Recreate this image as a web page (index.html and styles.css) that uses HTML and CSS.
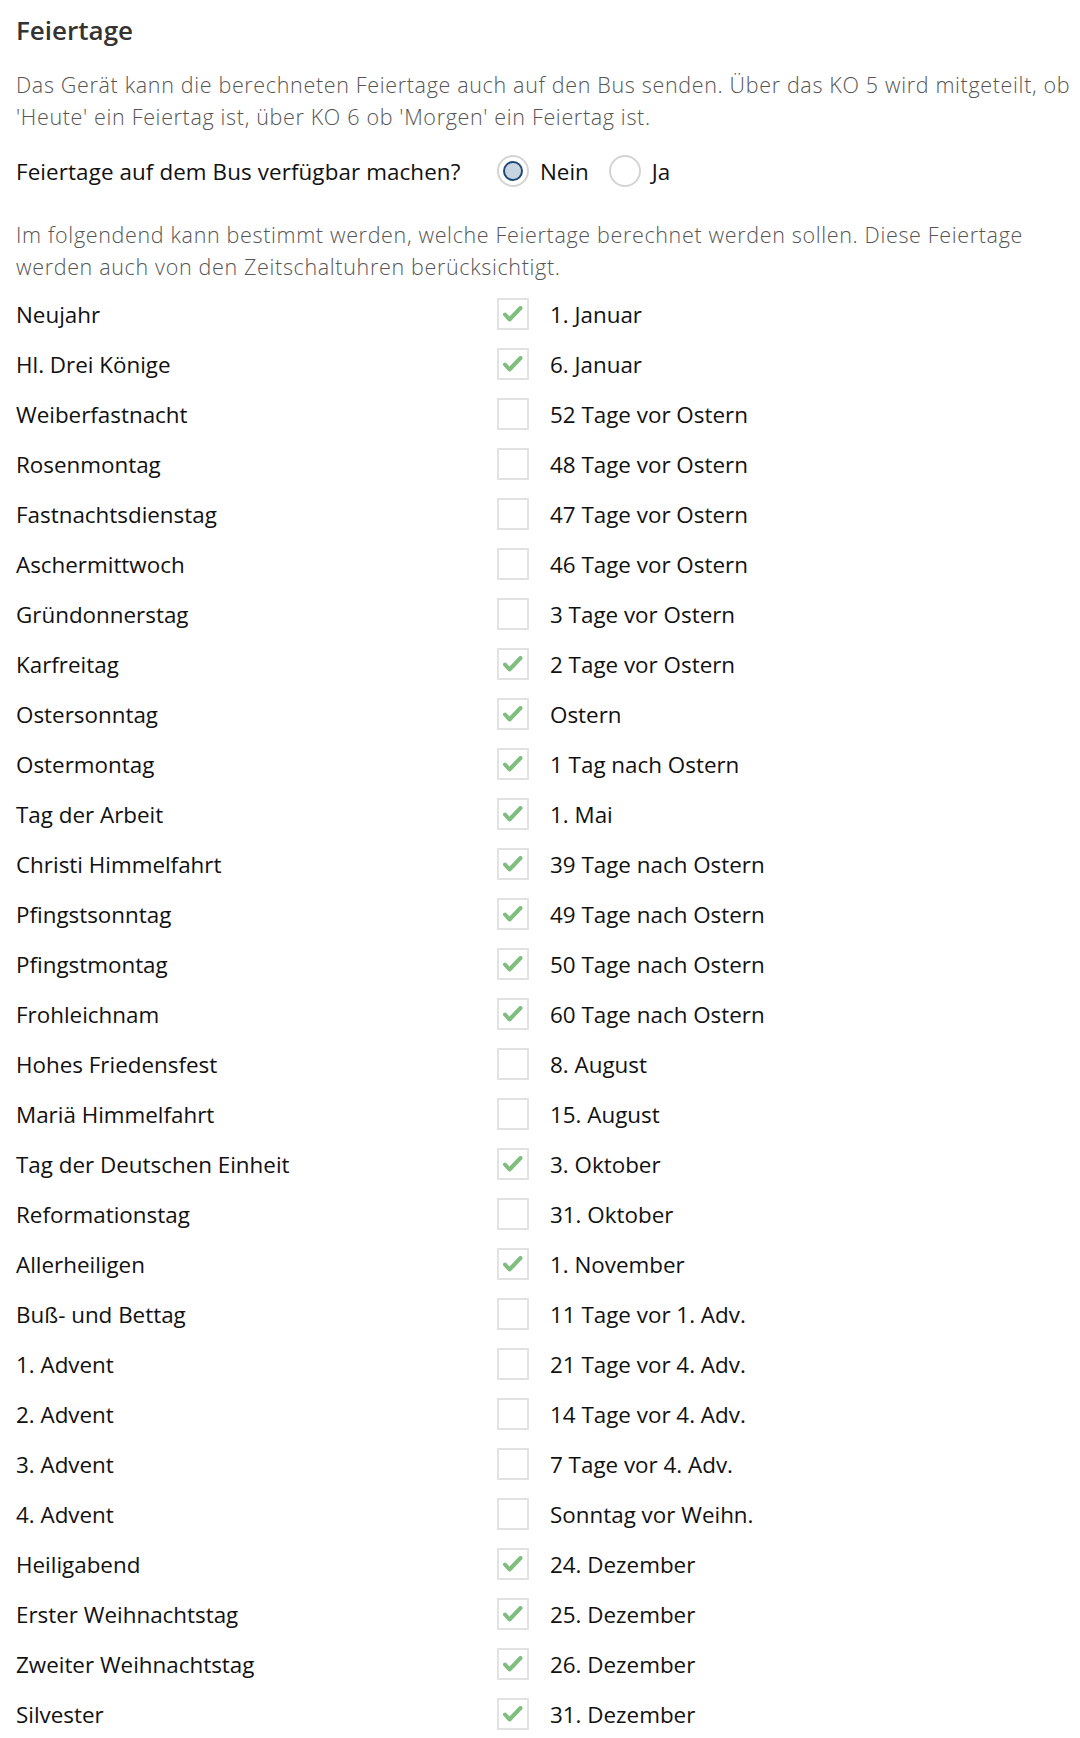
FILE: index.html
```html
<!DOCTYPE html>
<html lang="de">
<head>
<meta charset="utf-8">
<title>Feiertage</title>
<link rel="stylesheet" href="styles.css">
</head>
<body>
<div class="page">
  <h2 class="title">Feiertage</h2>
  <p class="desc">Das Gerät kann die berechneten Feiertage auch auf den Bus senden. Über das KO 5 wird mitgeteilt, ob 'Heute' ein Feiertag ist, über KO 6 ob 'Morgen' ein Feiertag ist.</p>

  <div class="radio-row">
    <div class="radio-label">Feiertage auf dem Bus verfügbar machen?</div>
    <div class="radio-group">
      <span class="radio checked"></span><span class="radio-text">Nein</span>
      <span class="radio"></span><span class="radio-text">Ja</span>
    </div>
  </div>

  <p class="desc desc2">Im folgendend kann bestimmt werden, welche Feiertage berechnet werden sollen. Diese Feiertage werden auch von den Zeitschaltuhren berücksichtigt.</p>

  <div class="list" id="list"></div>
</div>
<script src="app.js"></script>
</body>
</html>
```
FILE: app.js
```js
const items = [
  ["Neujahr", true, "1. Januar"],
  ["Hl. Drei Könige", true, "6. Januar"],
  ["Weiberfastnacht", false, "52 Tage vor Ostern"],
  ["Rosenmontag", false, "48 Tage vor Ostern"],
  ["Fastnachtsdienstag", false, "47 Tage vor Ostern"],
  ["Aschermittwoch", false, "46 Tage vor Ostern"],
  ["Gründonnerstag", false, "3 Tage vor Ostern"],
  ["Karfreitag", true, "2 Tage vor Ostern"],
  ["Ostersonntag", true, "Ostern"],
  ["Ostermontag", true, "1 Tag nach Ostern"],
  ["Tag der Arbeit", true, "1. Mai"],
  ["Christi Himmelfahrt", true, "39 Tage nach Ostern"],
  ["Pfingstsonntag", true, "49 Tage nach Ostern"],
  ["Pfingstmontag", true, "50 Tage nach Ostern"],
  ["Frohleichnam", true, "60 Tage nach Ostern"],
  ["Hohes Friedensfest", false, "8. August"],
  ["Mariä Himmelfahrt", false, "15. August"],
  ["Tag der Deutschen Einheit", true, "3. Oktober"],
  ["Reformationstag", false, "31. Oktober"],
  ["Allerheiligen", true, "1. November"],
  ["Buß- und Bettag", false, "11 Tage vor 1. Adv."],
  ["1. Advent", false, "21 Tage vor 4. Adv."],
  ["2. Advent", false, "14 Tage vor 4. Adv."],
  ["3. Advent", false, "7 Tage vor 4. Adv."],
  ["4. Advent", false, "Sonntag vor Weihn."],
  ["Heiligabend", true, "24. Dezember"],
  ["Erster Weihnachtstag", true, "25. Dezember"],
  ["Zweiter Weihnachtstag", true, "26. Dezember"],
  ["Silvester", true, "31. Dezember"]
];
const check = '<svg class="tick" viewBox="0 0 32 32" width="32" height="32"><path d="M8 16.5 L12.5 21.5 L23.5 10" fill="none" stroke="#7fbe7f" stroke-width="4" stroke-linecap="round" stroke-linejoin="round"/></svg>';
const list = document.getElementById('list');
list.innerHTML = items.map(([name, on, date]) =>
  `<div class="row"><div class="name">${name}</div><div class="cell"><span class="box">${on ? check : ''}</span><span class="date">${date}</span></div></div>`
).join('');
```
FILE: styles.css
```css
html, body {
  margin: 0;
  padding: 0;
  background: #ffffff;
}
body {
  font-family: "Open Sans", "Noto Sans", sans-serif;
  color: #111;
}
.page {
  padding: 12px 4px 0 16px;
}
.title {
  margin: 0;
  font-size: 26px;
  line-height: 36px;
  font-weight: 600;
  color: #333;
}
.desc {
  margin: 21px 0 0;
  font-size: 21.5px;
  line-height: 32px;
  font-weight: 300;
  letter-spacing: 0.66px;
  color: #555;
}
.radio-row {
  display: grid;
  grid-template-columns: 481px auto;
  align-items: center;
  height: 40px;
  margin-top: 18px;
  font-size: 22.4px;
}
.radio-label {
  letter-spacing: 0.1px;
}
.radio-group {
  display: flex;
  align-items: center;
}
.radio {
  box-sizing: border-box;
  width: 32px;
  height: 32px;
  border: 2px solid #d4d4d4;
  border-radius: 50%;
  display: flex;
  align-items: center;
  justify-content: center;
}
.radio.checked::after {
  content: "";
  box-sizing: border-box;
  width: 20px;
  height: 20px;
  border-radius: 50%;
  border: 2.5px solid #1f4a78;
  background: #c9d4e1;
}
.radio-text {
  margin-left: 11px;
  margin-right: 20px;
}
.desc2 {
  margin-top: 28px;
}
.list {
  margin-top: 6px;
}
.row {
  display: grid;
  grid-template-columns: 481px auto;
  align-items: center;
  height: 50px;
  font-size: 22.4px;
}
.cell {
  display: flex;
  align-items: center;
}
.box {
  box-sizing: border-box;
  width: 32px;
  height: 32px;
  border: 2px solid #e2e2e2;
  position: relative;
  flex: none;
}
.tick {
  position: absolute;
  left: -2px;
  top: -2px;
  filter: blur(0.5px);
}
.date {
  margin-left: 21px;
}
```
